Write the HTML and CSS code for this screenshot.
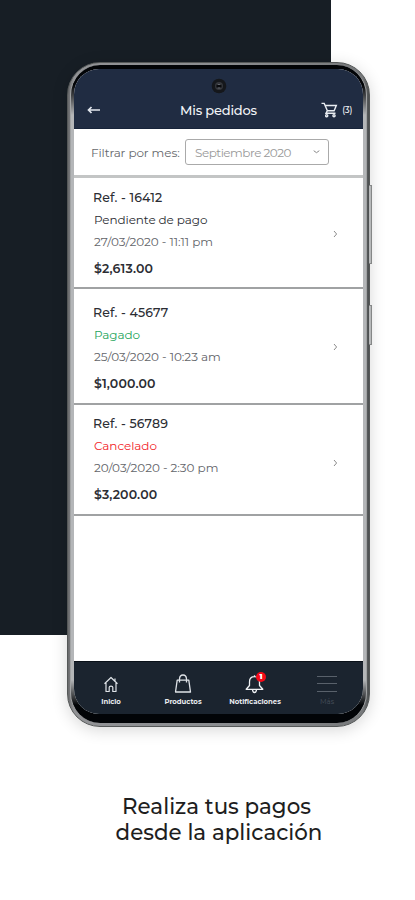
FILE: index.html
```html
<!DOCTYPE html>
<html lang="es">
<head>
<meta charset="utf-8">
<title>Mis pedidos</title>
<link rel="stylesheet" href="styles.css">
</head>
<body>
<div class="backdrop"></div>
<main class="page">
  <div class="phone">
    <i class="side power"></i><i class="side volume"></i>
    <div class="bezel">
      <div class="screen">
        <header class="top">
          <svg class="camera" viewBox="0 0 16 16"><circle cx="8" cy="8" r="7.3" fill="#15171b"/><circle cx="8" cy="8" r="4" fill="#34363b"/><circle cx="8" cy="8" r="2.6" fill="#090a0d"/><path d="M6.5 6.3h3M6.5 10h3" stroke="#777b82"/></svg>
          <div class="bar">
            <svg class="back" viewBox="0 0 14 10" fill="none" stroke="#e2e6ed" stroke-width="1.7"><path d="M13 5H2M4.500 2 1.500 5l3 3"/></svg>
            <h1>Mis pedidos</h1>
            <div class="cart">
              <svg width="17" height="16" viewBox="0 0 17 16" fill="none" stroke="#e9edf2" stroke-width="1.4"><path d="M.5 1.4h2.700l3.200 7.300h6.700l2.200-5.200H4.200M6.400 8.700 5 11.300h9.500"/><circle cx="5.700" cy="13.700" r="1.100"/><circle cx="13" cy="13.700" r="1.100"/></svg>
              <span>(3)</span>
            </div>
          </div>
        </header>
        <section class="filter">
          <label>Filtrar por mes:</label>
          <div class="select"><span>Septiembre 2020</span><svg width="7" height="4" viewBox="0 0 7 4" fill="none" stroke="#888"><path d="m.7.7 2.800 2 2.800-2"/></svg></div>
        </section>
        <article class="order first">
          <div><h2>Ref. - 16412</h2><p class="state pending">Pendiente de pago</p><p class="date">27/03/2020 - 11:11 pm</p><p class="price">$2,613.00</p></div>
          <svg class="chev" viewBox="0 0 5 8"><path d="m1 1 2.600 3L1 7"/></svg>
        </article>
        <article class="order second">
          <div><h2>Ref. - 45677</h2><p class="state paid">Pagado</p><p class="date">25/03/2020 - 10:23 am</p><p class="price">$1,000.00</p></div>
          <svg class="chev" viewBox="0 0 5 8"><path d="m1 1 2.600 3L1 7"/></svg>
        </article>
        <article class="order third">
          <div><h2>Ref. - 56789</h2><p class="state cancelled">Cancelado</p><p class="date">20/03/2020 - 2:30 pm</p><p class="price">$3,200.00</p></div>
          <svg class="chev" viewBox="0 0 5 8"><path d="m1 1 2.600 3L1 7"/></svg>
        </article>
        <nav class="tabs">
          <a class="tab"><svg width="16" height="20" viewBox="0 0 16 20" fill="none" stroke="#dfe3e8" stroke-width="1.2" stroke-linejoin="round"><path d="M1.500 9.700 8 3.500l6.500 6.200M3 9V17.500h3.200v-4.200q0-1.200 1.800-1.200t1.800 1.200v4.200H13V9M12 4.500v2.300"/></svg><span>Inicio</span></a>
          <a class="tab"><svg width="18" height="20" viewBox="0 0 18 20" fill="none" stroke="#dfe3e8" stroke-width="1.300" stroke-linejoin="round"><path d="M3.200 6.200h11.600L16.500 18H1.500ZM5.500 8.500V5Q5.700 1 9 1t3.500 4v3.500"/></svg><span>Productos</span></a>
          <a class="tab"><svg width="20" height="20" viewBox="0 0 20 20" fill="none" stroke="#eef0f3" stroke-width="1.300" stroke-linejoin="round"><path d="M9.500 1.200v1.500M9.500 2.700C6.200 2.700 4.500 5 4.500 8v3.500L1.200 15.300h16.600L14.500 11.500V8c0-3-1.700-5.300-5-5.300ZM7.500 15.500q.2 3 2 3t2-3"/></svg><b class="badge">1</b><span>Notificaciones</span></a>
          <a class="tab dim"><svg width="20" height="20" viewBox="0 0 20 20" stroke="#59616b" stroke-width="1"><path d="M0 2.500h20M0 9.500h20M0 17.500h20"/></svg><span>Más</span></a>
        </nav>
      </div>
    </div>
  </div>
  <p class="caption"><span class="lead">Realiza tus pagos</span><br>desde la aplicación</p>
</main>
</body>
</html>
```
FILE: styles.css
```css
* { box-sizing: border-box; }
body { margin: 0; width: 415px; height: 900px; overflow: hidden; background: #fff; font-family: Montserrat, Inter, sans-serif; color: #2b2d33; }
h1, h2, p { margin: 0; font-weight: 400; white-space: nowrap; }
svg { display: block; flex: none; }
.backdrop { position: absolute; left: 0; top: 0; width: 331px; height: 635px; background: #171e25; }
.page { position: relative; padding: 62px 0 0 67px; }
.phone { position: relative; width: 303px; height: 665px; border-radius: 33px; padding: 2px 2px 3px 2px; background: linear-gradient(90deg, #68696b 0, #929396 2%, #8b8d90 50%, #77797b 98%, #4b4e4f 100%); border: 1px solid #555858; box-shadow: 0 3px 16px rgba(0,0,0,.16); }
.side { position: absolute; right: -3px; width: 3px; background: #b7b9ba; border: 1px solid #858787; border-left: 0; }
.power { top: 122px; height: 79px; }
.volume { top: 242px; height: 40px; }
.bezel { height: 100%; padding: 4px 3px 9px 3px; border-radius: 30px; background: linear-gradient(#020407 0 20px, #b4b6b8 50px 615px, #020407 640px); border: 1px solid #a1a3a4; border-width: 0 1px; }
.screen { height: 100%; display: flex; flex-direction: column; background: #fff; border-radius: 25px; overflow: hidden; }
.top { height: 60px; background: #202c42; border-bottom: 1px solid #17243a; flex: none; }
.camera { width: 16px; height: 16px; margin: 9px auto 0; }
.bar { height: 33px; display: grid; grid-template-columns: 90px 1fr 90px; align-items: center; color: #f3f5f8; }
.back { width: 14px; height: 10px; margin: -2px 0 0 13px; }
h1 { font-size: 13px; letter-spacing: -.2px; text-align: center; font-weight: 500; margin-top: -1px; }
.cart { display: flex; align-items: center; gap: 4px; justify-content: flex-end; padding-right: 11px; margin-top: -2px; }
.cart span { font-size: 8.5px; letter-spacing: -.3px; font-weight: 500; }
.filter { height: 49px; flex: none; display: flex; align-items: center; padding-left: 17px; border-bottom: 3px solid #c3c5c5; gap: 4px; }
.filter label { width: 90px; font-size: 12px; letter-spacing: -.1px; color: #66686c; white-space: nowrap; }
.select { width: 144px; height: 26px; border: 1px solid #aaa; border-radius: 3px; display: flex; align-items: center; justify-content: space-between; padding: 0 8px 0 9px; font-size: 12px; letter-spacing: -.5px; color: #999; white-space: nowrap; }
.order { flex: none; display: flex; justify-content: space-between; border-bottom: 2px solid #a0a2a3; padding: 8px 25px 0 19px; line-height: 22px; font-size: 12px; }
.first { height: 111px; padding-top: 9px; }
.second { height: 116px; padding-top: 13px; }
.third { height: 111px; padding-top: 8px; }
.order h2 { font-size: 12.500px; font-weight: 500; letter-spacing: .15px; }
.state, .date, .price { padding-left: 1px; }
.pending { letter-spacing: -.1px; }
.paid { color: #25a55c; letter-spacing: -.1px; }
.cancelled { color: #f21d29; letter-spacing: -.07px; }
.date { color: #626469; letter-spacing: -.05px; }
.price { font-size: 12.500px; font-weight: 600; letter-spacing: .15px; padding-top: 5px; }
.chev { width: 5px; height: 8px; fill: none; stroke: #8b8b8b; align-self: flex-start; margin-top: 43px; }
.second .chev { margin-top: 41px; }
.third .chev { margin-top: 46px; }
.tabs { margin-top: auto; height: 53px; flex: none; background: #1b242f; border-top: 1px solid #0a1119; display: grid; grid-template-columns: repeat(4, 72px); padding-left: 1px; }
.tab { position: relative; display: flex; flex-direction: column; align-items: center; padding-top: 12px; gap: 3px; color: #e7eaee; font-size: 6.900px; line-height: 9px; font-weight: 700; }
.badge { position: absolute; left: 37px; top: 10px; width: 10px; height: 10px; border-radius: 50%; background: #f50a18; color: #fff; font-size: 7px; line-height: 10px; text-align: center; }
.dim { color: #4a525d; font-weight: 400; }
.caption { margin: 66px 0 0 -67px; width: 415px; padding-left: 23px; text-align: center; font-size: 21.400px; line-height: 26px; font-weight: 500; color: #1e1e1e; }
.lead { margin-right: 5px; }
```
